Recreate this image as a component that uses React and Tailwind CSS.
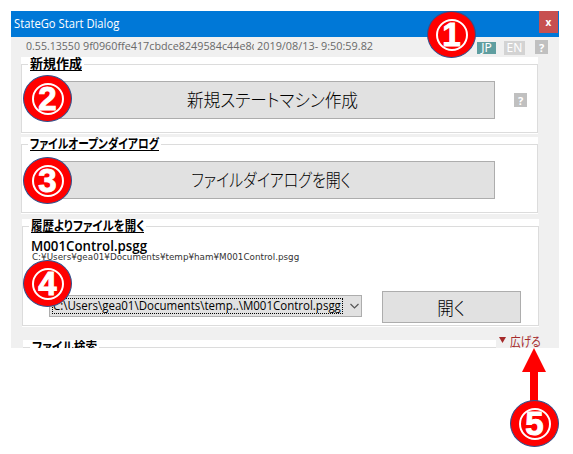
const jp = "font-['Noto_Sans_CJK_JP',sans-serif] [font-feature-settings:'palt'] whitespace-nowrap";
const latin = "font-['Open_Sans','Noto_Sans_CJK_JP',sans-serif] whitespace-nowrap";

function Marker({ n, className }) {
  return (
    <div className={`absolute z-10 flex h-[47px] w-[49px] items-center justify-center rounded-[50%] border border-[#2f528f] bg-[#ff0000] ${className}`}>
      <div className="flex h-[32px] w-[32px] items-center justify-center rounded-[50%] border-2 border-white">
        <span className="mt-px font-['Liberation_Sans',sans-serif] text-[33px] leading-[28px] font-bold text-white [-webkit-text-stroke:1px_white]">{n}</span>
      </div>
    </div>
  );
}

function Group({ title, titleClass, textClass, className, children }) {
  return (
    <section className={`bg-white pt-[7px] pb-px ${className}`}>
      <div className="h-full border border-[#dcdcdc]">
        <div className="-mt-2 flex h-[15px]">
          <h2 className={`${jp} ml-[6px] h-[15px] bg-white px-[2px] text-[13px] font-bold text-black`}>
            <span className={`block h-[14px] border-b border-black leading-[12px] ${titleClass}`}>
              <span className={`block origin-left ${textClass}`}>{title}</span>
            </span>
          </h2>
        </div>
        {children}
      </div>
    </section>
  );
}

function Help({ className }) {
  return (
    <span className={`flex h-[14px] w-[13px] items-center justify-center bg-[#c0c0c0] font-['Noto_Sans',sans-serif] text-[11px] leading-none font-bold text-white ${className}`}>?</span>
  );
}

export default function App() {
  return (
    <div className="relative h-[454px] w-[573px] overflow-hidden bg-white pt-[11px] pl-[11px]">
      <main className="h-[337px] w-[548px] overflow-hidden bg-[#f0f0f0]">
        <header className="flex h-[26px] items-start justify-between bg-[#0078d7] pl-[3px]">
          <h1 className={`${latin} origin-left scale-x-[.935] text-[12px] leading-[25px] text-white`}>StateGo Start Dialog</h1>
          <button className="mr-px flex h-[22px] w-[19px] items-center justify-center bg-[#c75050] font-['Noto_Sans',sans-serif] text-[10px] font-bold text-white">x</button>
        </header>

        <div className="flex h-5 items-start pl-[15px]">
          <div className={`${latin} flex text-[11.5px] leading-[17px] text-[#696969]`}>
            <span className="w-[57px]"><span className="inline-block origin-left scale-x-[.92]">0.55.13550</span></span>
            <span className="w-[171px] overflow-hidden"><span className="inline-block origin-left scale-x-[.937]">9f0960ffe417cbdce8249584c44e8d</span></span>
            <span className="ml-[3px] w-[120px]"><span className="inline-block origin-left scale-x-[.945]">2019/08/13- 9:50:59.82</span></span>
          </div>
          <span className="mt-[5px] ml-[100px] flex h-3 w-[19px] items-center justify-center bg-[#5f9ea0] font-['Noto_Sans',sans-serif] text-[12px] leading-none text-white">JP</span>
          <span className="mt-1 ml-2 flex h-[14px] w-[21px] items-center justify-center bg-[#d3d3d3] font-['Noto_Sans',sans-serif] text-[12px] leading-none text-white">EN</span>
          <Help className="mt-[3px] ml-[10px]" />
        </div>

        <Group title="新規作成" titleClass="w-[52px]" textClass="scale-x-100" className="ml-[10px] h-[77px] w-[517px]">
          <div className="mt-[9px] flex items-center pl-[18px]">
            <button className={`${jp} h-[38px] w-[455px] border border-[#adadad] bg-[#e1e1e1] pb-[2px] text-[18px] leading-[33px] text-black`}>
              <span className="ml-[9px] inline-block scale-x-[.925] font-light">新規ステートマシン作成</span>
            </button>
            <Help className="ml-[19px]" />
          </div>
        </Group>

        <Group title="ファイルオープンダイアログ" titleClass="w-[129px]" textClass="scale-x-[.825]" className="mt-[3px] ml-[10px] h-[77px] w-[517px]">
          <div className="mt-[9px] pl-[18px]">
            <button className={`${jp} h-[38px] w-[455px] border border-[#adadad] bg-[#e1e1e1] pb-[2px] text-[18px] leading-[33px] font-light text-black`}>
              <span className="ml-[7px] inline-block scale-x-[.83]">ファイルダイアログを開く</span>
            </button>
          </div>
        </Group>

        <Group title="履歴よりファイルを開く" titleClass="w-[113px]" textClass="scale-x-[.88]" className="mt-[5px] ml-[11px] h-[108px] w-[517px]">
          <div className="flex h-[85px] flex-col pl-2">
            <strong className={`${latin} mt-[3px] h-[13px] origin-left scale-x-[.95] text-[14px] leading-[17px] font-semibold text-black`}>M001Control.psgg</strong>
            <small className="h-3 origin-left scale-x-[.975] pl-px font-['DejaVu_Sans',sans-serif] text-[9px] leading-[15px] whitespace-nowrap text-[#333]">C:¥Users¥gea01¥Documents¥temp¥ham¥M001Control.psgg</small>
            <div className="mt-[29px] flex items-start">
              <button className="mt-1 ml-[18px] flex h-[22px] w-[313px] items-center border border-[#adadad] bg-[#e1e1e1] pl-[2px]">
                <span className={`${latin} flex h-4 w-[291px] shrink-0 items-center border border-dotted border-black text-[12.5px] text-black`}>
                  <span className="inline-block origin-left scale-x-[.92]">C:\Users\gea01\Documents\temp..\M001Control.psgg</span>
                </span>
                <svg className="ml-[7px] h-[6px] w-[9px] shrink-0" viewBox="0 0 9 6" fill="none" stroke="#555" strokeWidth="1.2"><path d="M.5 1 4.5 5 8.5 1" /></svg>
              </button>
              <button className={`${jp} ml-5 h-8 w-[139px] border border-[#adadad] bg-[#e1e1e1] text-[18px] leading-[27px] font-light text-black`}>
                <span className="inline-block scale-x-[.92]">開く</span>
              </button>
            </div>
          </div>
        </Group>

        <div className="flex h-[21px] items-end">
          <Group title="ファイル検索" titleClass="w-[65px]" textClass="scale-x-[.9]" className="mt-[13px] ml-3 h-[30px] w-[473px] self-start" />
          <button className={`${jp} ml-[3px] flex h-[17px] items-center self-start pt-[9px] text-[13px] leading-none text-[#a52a2a]`}>
            <svg className="mr-[4px] h-[6px] w-[7px]" viewBox="0 0 7 6"><path d="M0 0h7L3.5 6Z" fill="#a52a2a" /></svg>
            <span className="inline-block origin-left scale-x-[.82]">広げる</span>
          </button>
        </div>
      </main>

      <Marker n="1" className="top-[11px] left-[427px]" />
      <Marker n="2" className="top-[75px] left-[23px]" />
      <Marker n="3" className="top-[157px] left-[23px]" />
      <Marker n="4" className="top-[260px] left-[23px]" />
      <svg className="absolute top-[348px] left-[522px] h-[56px] w-6" viewBox="0 0 24 56"><path d="M12 0 24 24H16V56H8V24H0Z" fill="#f00" /></svg>
      <Marker n="5" className="top-[400px] left-[510px]" />
    </div>
  );
}
